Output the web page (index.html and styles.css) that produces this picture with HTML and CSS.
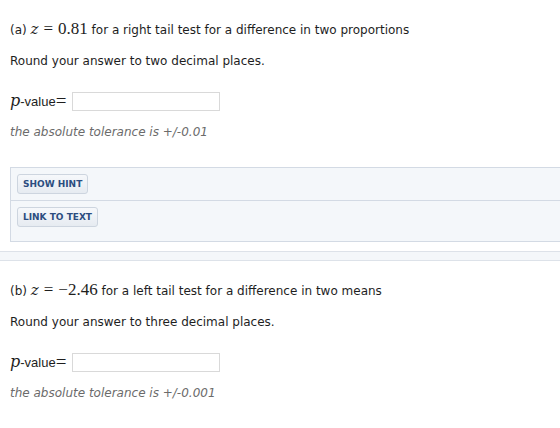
FILE: index.html
```html
<!DOCTYPE html>
<html lang="en">
<head>
    <meta charset="UTF-8">
    <title>Hypothesis test p-values</title>
    <link rel="stylesheet" href="styles.css">
</head>
<body>
    <div class="question">
        <p class="prompt">(a) <span class="math"><span class="var">z</span><span class="op">=</span>0.81</span> for a right tail test for a difference in two proportions</p>
        <p class="instr">Round your answer to two decimal places.</p>
        <div class="answer">
            <span class="math"><span class="var">p</span></span>-value<span class="math eq">=</span>
            <input type="text" class="answer-box">
        </div>
        <p class="tolerance">the absolute tolerance is +/-0.01</p>
    </div>

    <div class="help-panel">
        <div class="help-row"><button class="help-btn">Show Hint</button></div>
        <div class="help-row last"><button class="help-btn">Link to Text</button></div>
    </div>

    <div class="divider"></div>

    <div class="question">
        <p class="prompt">(b) <span class="math"><span class="var">z</span><span class="op">=</span>&minus;2.46</span> for a left tail test for a difference in two means</p>
        <p class="instr">Round your answer to three decimal places.</p>
        <div class="answer">
            <span class="math"><span class="var">p</span></span>-value<span class="math eq">=</span>
            <input type="text" class="answer-box">
        </div>
        <p class="tolerance">the absolute tolerance is +/-0.001</p>
    </div>
</body>
</html>
```

FILE: styles.css
```css
body {
    margin: 0;
    overflow: hidden;
    background: #fff;
    color: #1e1e1e;
    font-family: "DejaVu Sans", Verdana, sans-serif;
    font-size: 12px;
}
.question {
    padding: 0 10px;
}
.prompt {
    margin: 0;
    padding-top: 19px;
    line-height: 20px;
}
.math {
    font-family: "Liberation Serif", "Times New Roman", serif;
    font-size: 17px;
}
/* italic variables, like TeX output */
.var {
    font-family: "DejaVu Serif", serif;
    font-style: italic;
    font-size: 15px;
}
.op {
    margin: 0 5px;
}
.instr {
    margin: 11px 0 0;
    line-height: 20px;
}
.answer {
    margin-top: 20px;
    display: flex;
    align-items: center;
    font-family: "Liberation Sans", Arial, sans-serif;
    font-size: 13px;
    height: 20px;
}
.answer .var {
    font-size: 16px;
}
.answer .eq {
    font-size: 19px;
}
.answer-box {
    margin-left: 6px;
    width: 148px;
    height: 19px;
    box-sizing: border-box;
    border: 1px solid #d9d9d9;
    padding: 0 4px;
}
.tolerance {
    margin: 11px 0 0;
    line-height: 20px;
    font-style: italic;
    color: #6b6b6b;
}
.help-panel {
    margin: 25px -20px 0 10px;
    background: #f4f7fa;
    border: 1px solid #d3dae4;
}
.help-row {
    padding: 6px 6px;
    border-bottom: 1px solid #d3dae4;
}
.help-row.last {
    border-bottom: none;
    padding-bottom: 14px;
}
.help-btn {
    font-family: "DejaVu Sans", Verdana, sans-serif;
    font-size: 9px;
    font-weight: bold;
    text-transform: uppercase;
    color: #2c4d80;
    background: linear-gradient(#f6f8fb, #e6ebf1);
    border: 1px solid #cdd5df;
    border-radius: 3px;
    height: 20px;
    padding: 0 5px;
}
.divider {
    margin-top: 9px;
    height: 8px;
    background: #f4f7fa;
    border-top: 1px solid #dde2e9;
    border-bottom: 1px solid #dde2e9;
}
```
